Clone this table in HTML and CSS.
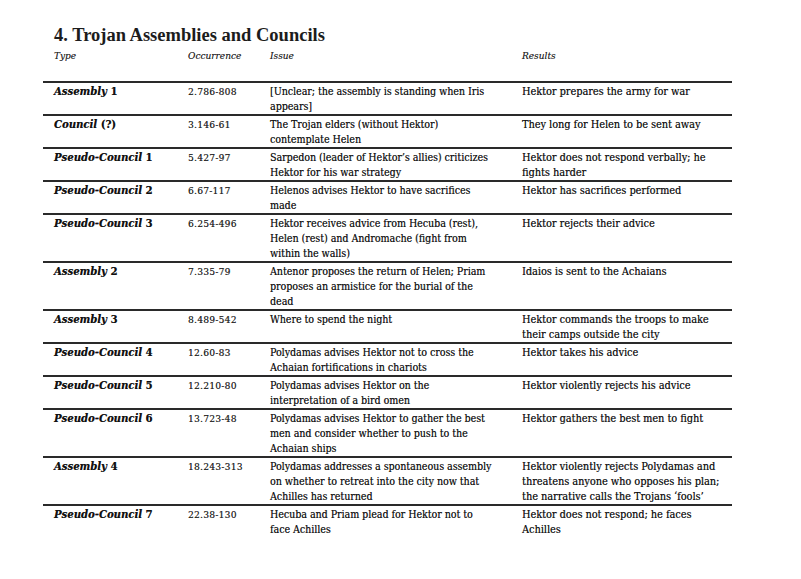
FILE: index.html
```html
<!DOCTYPE html>
<html>
<head>
<meta charset="utf-8">
<link rel="stylesheet" href="styles.css">
</head>
<body>
<div class="page">
  <h1 class="title">4. Trojan Assemblies and Councils</h1>
  <table class="tbl">
    <colgroup>
      <col class="c-type"><col class="c-occ"><col class="c-issue"><col class="c-res">
    </colgroup>
    <thead>
      <tr class="head">
        <th class="p1">Type</th><th class="p2">Occurrence</th><th class="p3">Issue</th><th class="p4">Results</th>
      </tr>
    </thead>
    <tbody>
      <tr>
        <td class="p1 type"><i>Assembly</i> 1</td><td class="p2 occ">2.786-808</td>
        <td class="p3">[Unclear; the assembly is standing when Iris<br>appears]</td>
        <td class="p4">Hektor prepares the army for war</td>
      </tr>
      <tr>
        <td class="p1 type"><i>Council</i> (?)</td><td class="p2 occ">3.146-61</td>
        <td class="p3">The Trojan elders (without Hektor)<br>contemplate Helen</td>
        <td class="p4">They long for Helen to be sent away</td>
      </tr>
      <tr>
        <td class="p1 type"><i>Pseudo-Council</i> 1</td><td class="p2 occ">5.427-97</td>
        <td class="p3">Sarpedon (leader of Hektor’s allies) criticizes<br>Hektor for his war strategy</td>
        <td class="p4">Hektor does not respond verbally; he<br>fights harder</td>
      </tr>
      <tr>
        <td class="p1 type"><i>Pseudo-Council</i> 2</td><td class="p2 occ">6.67-117</td>
        <td class="p3">Helenos advises Hektor to have sacrifices<br>made</td>
        <td class="p4">Hektor has sacrifices performed</td>
      </tr>
      <tr>
        <td class="p1 type"><i>Pseudo-Council</i> 3</td><td class="p2 occ">6.254-496</td>
        <td class="p3">Hektor receives advice from Hecuba (rest),<br>Helen (rest) and Andromache (fight from<br>within the walls)</td>
        <td class="p4">Hektor rejects their advice</td>
      </tr>
      <tr>
        <td class="p1 type"><i>Assembly</i> 2</td><td class="p2 occ">7.335-79</td>
        <td class="p3">Antenor proposes the return of Helen; Priam<br>proposes an armistice for the burial of the<br>dead</td>
        <td class="p4">Idaios is sent to the Achaians</td>
      </tr>
      <tr>
        <td class="p1 type"><i>Assembly</i> 3</td><td class="p2 occ">8.489-542</td>
        <td class="p3">Where to spend the night</td>
        <td class="p4">Hektor commands the troops to make<br>their camps outside the city</td>
      </tr>
      <tr>
        <td class="p1 type"><i>Pseudo-Council</i> 4</td><td class="p2 occ">12.60-83</td>
        <td class="p3">Polydamas advises Hektor not to cross the<br>Achaian fortifications in chariots</td>
        <td class="p4">Hektor takes his advice</td>
      </tr>
      <tr>
        <td class="p1 type"><i>Pseudo-Council</i> 5</td><td class="p2 occ">12.210-80</td>
        <td class="p3">Polydamas advises Hektor on the<br>interpretation of a bird omen</td>
        <td class="p4">Hektor violently rejects his advice</td>
      </tr>
      <tr>
        <td class="p1 type"><i>Pseudo-Council</i> 6</td><td class="p2 occ">13.723-48</td>
        <td class="p3">Polydamas advises Hektor to gather the best<br>men and consider whether to push to the<br>Achaian ships</td>
        <td class="p4">Hektor gathers the best men to fight</td>
      </tr>
      <tr>
        <td class="p1 type"><i>Assembly</i> 4</td><td class="p2 occ">18.243-313</td>
        <td class="p3">Polydamas addresses a spontaneous assembly<br>on whether to retreat into the city now that<br>Achilles has returned</td>
        <td class="p4">Hektor violently rejects Polydamas and<br>threatens anyone who opposes his plan;<br>the narrative calls the Trojans ‘fools’</td>
      </tr>
      <tr class="last">
        <td class="p1 type"><i>Pseudo-Council</i> 7</td><td class="p2 occ">22.38-130</td>
        <td class="p3">Hecuba and Priam plead for Hektor not to<br>face Achilles</td>
        <td class="p4">Hektor does not respond; he faces<br>Achilles</td>
      </tr>
    </tbody>
  </table>
</div>
</body>
</html>
```

FILE: styles.css
```css
html, body {
  margin: 0;
  padding: 0;
  background: #ffffff;
}
body {
  color: #1a1a1a;
  font-family: "DejaVu Serif Condensed", "DejaVu Serif", serif;
}
.page {
  padding: 24px 0 0 43px;
}
.title {
  margin: 0 0 0 11px;
  font-family: "Liberation Serif", serif;
  font-weight: bold;
  font-size: 18.5px;
  line-height: 22px;
  color: #1c1c1c;
}
.tbl {
  width: 689px;
  border-collapse: collapse;
  table-layout: fixed;
}
.c-type { width: 135px; }
.c-occ { width: 85px; }
.c-issue { width: 250px; }
.c-res { width: 219px; }
.tbl th {
  text-align: left;
  font-style: italic;
  font-weight: normal;
  font-size: 10px;
  line-height: 14px;
  padding-top: 3px;
  padding-bottom: 18px;
  vertical-align: top;
  color: #2a2a2a;
  text-shadow: 0 0 0.4px rgba(0, 0, 0, 0.5);
}
.tbl td {
  font-size: 10.5px;
  line-height: 15px;
  vertical-align: top;
  padding-top: 1px;
  padding-bottom: 0;
  border-top: 2px solid #2a2a2a;
  white-space: nowrap;
  height: 30px;
  color: #111;
  text-shadow: 0.3px 0 0 rgba(0, 0, 0, 0.55);
}
.tbl td.p4 {
  font-size: 10.8px;
}
.tbl tr.last td { padding-bottom: 8px; }
.p1 { padding-left: 11px; }
.p2 { padding-left: 10px; }
.p3 { padding-left: 7px; }
.p4 { padding-left: 9px; }
.type {
  font-weight: bold;
  font-size: 11.2px !important;
}
.type i { font-style: italic; }
.tbl td.occ {
  font-size: 10px;
  letter-spacing: 0.3px;
  color: #222;
}
```
